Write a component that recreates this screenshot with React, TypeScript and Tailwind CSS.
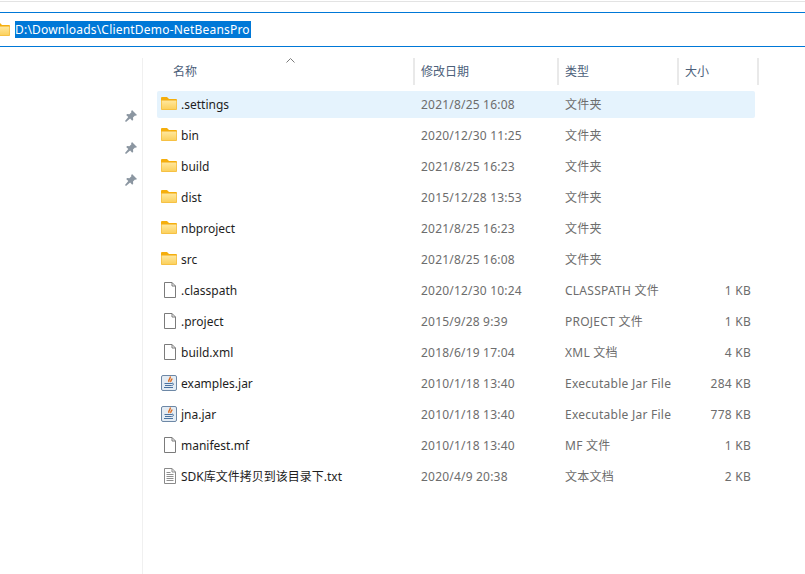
const rows = [
  { name: '.settings', date: '2021/8/25 16:08', type: '文件夹', size: '', icon: 'folder' },
  { name: 'bin', date: '2020/12/30 11:25', type: '文件夹', size: '', icon: 'folder' },
  { name: 'build', date: '2021/8/25 16:23', type: '文件夹', size: '', icon: 'folder' },
  { name: 'dist', date: '2015/12/28 13:53', type: '文件夹', size: '', icon: 'folder' },
  { name: 'nbproject', date: '2021/8/25 16:23', type: '文件夹', size: '', icon: 'folder' },
  { name: 'src', date: '2021/8/25 16:08', type: '文件夹', size: '', icon: 'folder' },
  { name: '.classpath', date: '2020/12/30 10:24', type: 'CLASSPATH 文件', size: '1 KB', icon: 'file' },
  { name: '.project', date: '2015/9/28 9:39', type: 'PROJECT 文件', size: '1 KB', icon: 'file' },
  { name: 'build.xml', date: '2018/6/19 17:04', type: 'XML 文档', size: '4 KB', icon: 'file' },
  { name: 'examples.jar', date: '2010/1/18 13:40', type: 'Executable Jar File', size: '284 KB', icon: 'jar' },
  { name: 'jna.jar', date: '2010/1/18 13:40', type: 'Executable Jar File', size: '778 KB', icon: 'jar' },
  { name: 'manifest.mf', date: '2010/1/18 13:40', type: 'MF 文件', size: '1 KB', icon: 'file' },
  { name: 'SDK库文件拷贝到该目录下.txt', date: '2020/4/9 20:38', type: '文本文档', size: '2 KB', icon: 'text' },
];

function FolderIcon() {
  return (
    <svg width="16" height="13" viewBox="0 0 16 13" className="shrink-0">
      <defs>
        <linearGradient id="folderBody" x1="0" y1="0" x2="0" y2="1">
          <stop offset="0" stopColor="#ffe79c" />
          <stop offset="1" stopColor="#fbd05c" />
        </linearGradient>
      </defs>
      <path d="M0 1a1 1 0 0 1 1-1h5l2 2h7a1 1 0 0 1 1 1v2H0z" fill="#f5ae0c" />
      <rect x="0" y="3" width="16" height="10" rx="1" fill="#f4bb3a" />
      <rect x=".7" y="3.700" width="14.600" height="8.600" fill="url(#folderBody)" />
    </svg>
  );
}

function FileIcon() {
  return (
    <svg width="12" height="16" viewBox="0 0 12 16" className="shrink-0">
      <path d="M.5.5h7.500l3.500 3.500v11.500h-11z" fill="#fff" stroke="#7b7b7b" />
      <path d="M8 .5v3.500h3.500" fill="none" stroke="#7b7b7b" />
    </svg>
  );
}

function TextIcon() {
  return (
    <svg width="12" height="16" viewBox="0 0 12 16" className="shrink-0">
      <path d="M.5.5h7.500l3.500 3.500v11.500h-11z" fill="#fff" stroke="#8a8a8a" />
      <path d="M8 .5v3.500h3.500" fill="none" stroke="#8a8a8a" />
      <path d="M2.500 4.500h4M2.500 6.500h7M2.500 8.500h7M2.500 10.500h7M2.500 12.500h7" stroke="#8f8f8f" />
    </svg>
  );
}

function JarIcon() {
  return (
    <svg width="16" height="16" viewBox="0 0 16 16" className="shrink-0">
      <rect x=".5" y=".5" width="15" height="15" rx="1.500" fill="#e4ecf4" stroke="#6d88a6" />
      <path d="M9 1.500c1.500 2-2.500 3-1 5.500M11 3.500c0 1.500-2 2-1 3.500" fill="none" stroke="#dd6a1e" strokeWidth="1.400" />
      <path d="M3.500 8.500h7.500M4 10.500h6.500M3 12.500h9" stroke="#4a72a0" strokeWidth="1.200" />
      <path d="M11 8c2 0 2 2.500-.5 2.500" fill="none" stroke="#4a72a0" />
    </svg>
  );
}

function PinIcon() {
  return (
    <svg width="12" height="12" viewBox="0 0 12 12">
      <path d="M7 0l5 5-1.200.8-.8-.3-2 2 .2 2.200-1 1-2.100-2.100L1 12 0 11l3.300-3.900-2.100-2.100 1-1 2.200.2 2-2-.3-.8z" fill="#8b96a1" />
    </svg>
  );
}

export default function App() {
  return (
    <div
      className="flex h-[574px] w-[805px] flex-col overflow-hidden bg-white text-[12px] text-[#1e1e1e]"
      style={{ fontFamily: '"Noto Sans", "Noto Sans CJK SC", sans-serif' }}
    >
      {/* top edge */}
      <div className="mt-px h-[1px] shrink-0 bg-[#e3e3e3]" />

      {/* address bar */}
      <div className="mt-[10px] flex h-[35px] shrink-0 items-center overflow-hidden border-y-[1px] border-[#0078d7]">
        <div className="ml-[-6px] mr-[5px]">
          <FolderIcon />
        </div>
        <span className="flex h-[17px] w-[236px] items-center whitespace-nowrap bg-[#0078d7] tracking-[0.2px] text-white">
          D:\Downloads\ClientDemo-NetBeansPro
        </span>
      </div>

      <div className="flex min-h-0 flex-1 pt-[11px]">
        {/* quick access pins */}
        <aside className="flex w-[143px] shrink-0 flex-col items-end border-r border-[#f0f0f0] pt-[52px] pr-[5px]">
          <div className="flex flex-col gap-[20px]">
            <PinIcon />
            <PinIcon />
            <PinIcon />
          </div>
        </aside>

        <main className="relative flex-1">
          {/* sort arrow */}
          <svg width="9" height="5" viewBox="0 0 9 5" className="absolute left-[143px] top-[0px]">
            <path d="M.5 4.500l4-4 4 4" fill="none" stroke="#7a7a7a" />
          </svg>

          {/* column headers */}
          <div className="flex h-[27px] text-[#4c607a]">
            <div className="flex w-[272px] items-center border-r-2 border-[#e9e9e9] pl-[30px]">名称</div>
            <div className="flex w-[144px] items-center border-r-2 border-[#e9e9e9] pl-[6px]">修改日期</div>
            <div className="flex w-[120px] items-center border-r-2 border-[#e9e9e9] pl-[6px]">类型</div>
            <div className="flex w-[80px] items-center border-r-2 border-[#e9e9e9] pl-[6px]">大小</div>
          </div>

          {/* file rows */}
          <div className="ml-[14px] mt-[6px] w-[598px]">
            {rows.map((row, i) => (
              <div
                key={row.name}
                className={
                  i === 0
                    ? 'flex h-[27px] items-center rounded-[2px] bg-[#e5f3fd]'
                    : 'mt-[4px] flex h-[27px] items-center rounded-[2px]'
                }
              >
                <div
                  className={
                    row.icon === 'folder'
                      ? 'mb-[3px] flex w-[24px] shrink-0 justify-center'
                      : row.icon === 'jar'
                        ? 'mb-[1px] flex w-[24px] shrink-0 justify-center'
                        : 'mb-[1px] flex w-[24px] shrink-0 justify-center pl-[1px]'
                  }
                >
                  {row.icon === 'folder' && <FolderIcon />}
                  {row.icon === 'file' && <FileIcon />}
                  {row.icon === 'text' && <TextIcon />}
                  {row.icon === 'jar' && <JarIcon />}
                </div>
                <div className="w-[240px] shrink-0 whitespace-nowrap">{row.name}</div>
                <div className="w-[144px] shrink-0 whitespace-nowrap tracking-[0.2px] text-[#6d6d6d]">{row.date}</div>
                <div className="w-[120px] shrink-0 whitespace-nowrap tracking-[0.25px] text-[#6d6d6d]">{row.type}</div>
                <div className="w-[66px] shrink-0 whitespace-nowrap text-right tracking-[0.25px] text-[#6d6d6d]">{row.size}</div>
              </div>
            ))}
          </div>
        </main>
      </div>
    </div>
  );
}
